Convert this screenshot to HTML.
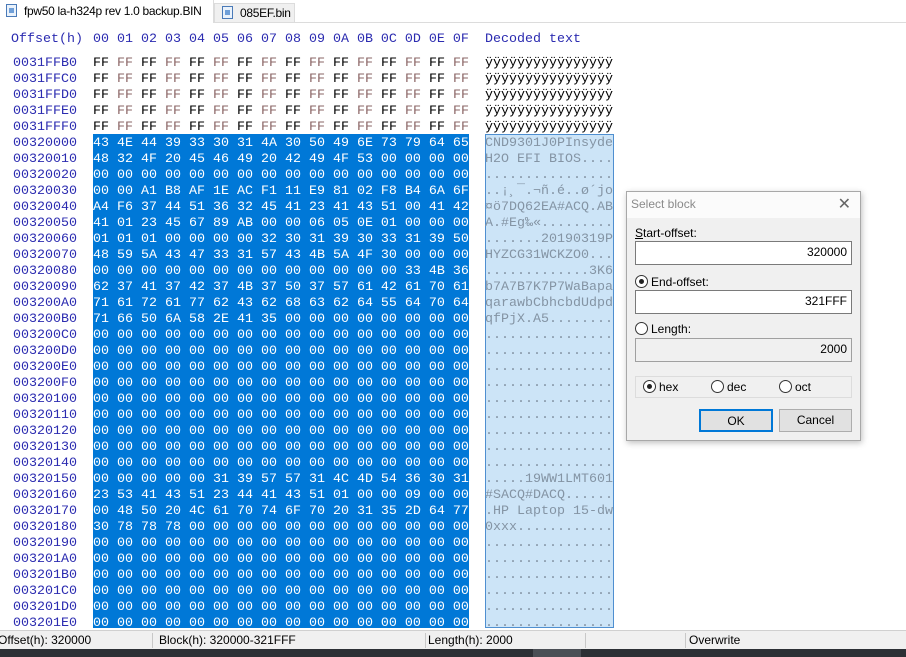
<!DOCTYPE html>
<html><head><meta charset="utf-8"><style>
*{margin:0;padding:0;box-sizing:border-box}
body{width:906px;height:657px;overflow:hidden;background:#fff;position:relative;font-family:"Liberation Sans",sans-serif}
.m{font-family:"Liberation Mono",monospace;font-size:13.33px;line-height:16px;white-space:pre;position:absolute}
.off{left:13px;top:56px;color:#2b2bb0}
.hex{left:93px;top:56px;color:#000}
.dec{left:485px;top:56px;width:128px;overflow:hidden;color:#000}
.hex i{font-style:normal;color:#8a6464}
.sel{color:#fff}
.dsel{color:#8494a4}
.hdr{top:32px;color:#2b2bb0}
#selbox{position:absolute;left:93px;top:134px;width:376px;height:494px;background:#0078d7}
#dbox{position:absolute;left:485px;top:134px;width:129px;height:494px;background:#cce4f7;border:1px solid #4f8fd0}
.tab{position:absolute;top:0;height:23px;font-size:12px;letter-spacing:-0.3px;line-height:22px;color:#000;white-space:nowrap;overflow:hidden}
.ic{display:inline-block;width:11px;height:13px;border:1px solid #4a7ab8;background:#eaf2fb;vertical-align:-2px;margin-right:7px;position:relative}
.ic:after{content:"";position:absolute;left:2px;top:3px;width:5px;height:5px;background:#6f9fd8}
#status{position:absolute;left:0;top:630px;width:906px;height:19px;background:#f0f0f0;border-top:1px solid #d0d0d0;font-size:12px;line-height:18px;color:#000}
#status span{position:absolute;top:0;white-space:nowrap}
#status b{position:absolute;top:2px;width:1px;height:15px;background:#c8c8c8}
#task{position:absolute;left:0;top:649px;width:906px;height:8px;background:#2c3035}
#dlg{position:absolute;left:626px;top:191px;width:235px;height:250px;background:#f0f0f0;border:1px solid #a8a8a8;box-shadow:1px 2px 6px rgba(0,0,0,.25);font-size:12px;color:#000}
#dlg .t{position:absolute;left:0;top:0;width:233px;height:26px;background:#fbfbfb;color:#8a8a8a;padding:5px 0 0 4px}
.inp{position:absolute;left:8px;width:217px;height:24px;background:#fff;border:1px solid #7a7a7a;text-align:right;padding:3px 4px 0 0}
.lbl{position:absolute;left:8px}
.rd{display:inline-block;width:13px;height:13px;border:1px solid #333;border-radius:50%;background:#fff;vertical-align:-2px;margin-right:3px;position:relative}
.rd.on:after{content:"";position:absolute;left:3px;top:3px;width:5px;height:5px;border-radius:50%;background:#222}
.btn{position:absolute;top:217px;height:23px;background:#e1e1e1;border:1px solid #adadad;text-align:center;line-height:20px}
</style></head><body>
<div style="position:absolute;left:0;top:22px;width:906px;height:1px;background:#dcdcdc"></div>
<div class="tab" style="left:0;width:214px;background:#fff;padding-left:6px;border-right:1px solid #dcdcdc;height:23px"><span class="ic"></span>fpw50 la-h324p rev 1.0 backup.BIN</div>
<div class="tab" style="left:214px;top:3px;height:19px;line-height:18px;width:81px;background:#f0f0f0;border:1px solid #dcdcdc;border-bottom:none;padding-left:7px"><span class="ic"></span>085EF.bin</div>

<div class="m hdr" style="left:11px">Offset(h)</div>
<div class="m hdr" style="left:93px">00 01 02 03 04 05 06 07 08 09 0A 0B 0C 0D 0E 0F</div>
<div class="m hdr" style="left:485px">Decoded text</div>

<div id="selbox"></div>
<div id="dbox"></div>

<div class="m off">0031FFB0
0031FFC0
0031FFD0
0031FFE0
0031FFF0
00320000
00320010
00320020
00320030
00320040
00320050
00320060
00320070
00320080
00320090
003200A0
003200B0
003200C0
003200D0
003200E0
003200F0
00320100
00320110
00320120
00320130
00320140
00320150
00320160
00320170
00320180
00320190
003201A0
003201B0
003201C0
003201D0
003201E0</div>

<div class="m hex">FF <i>FF</i> FF <i>FF</i> FF <i>FF</i> FF <i>FF</i> FF <i>FF</i> FF <i>FF</i> FF <i>FF</i> FF <i>FF</i>
FF <i>FF</i> FF <i>FF</i> FF <i>FF</i> FF <i>FF</i> FF <i>FF</i> FF <i>FF</i> FF <i>FF</i> FF <i>FF</i>
FF <i>FF</i> FF <i>FF</i> FF <i>FF</i> FF <i>FF</i> FF <i>FF</i> FF <i>FF</i> FF <i>FF</i> FF <i>FF</i>
FF <i>FF</i> FF <i>FF</i> FF <i>FF</i> FF <i>FF</i> FF <i>FF</i> FF <i>FF</i> FF <i>FF</i> FF <i>FF</i>
FF <i>FF</i> FF <i>FF</i> FF <i>FF</i> FF <i>FF</i> FF <i>FF</i> FF <i>FF</i> FF <i>FF</i> FF <i>FF</i>
<span class="sel">43 4E 44 39 33 30 31 4A 30 50 49 6E 73 79 64 65
48 32 4F 20 45 46 49 20 42 49 4F 53 00 00 00 00
00 00 00 00 00 00 00 00 00 00 00 00 00 00 00 00
00 00 A1 B8 AF 1E AC F1 11 E9 81 02 F8 B4 6A 6F
A4 F6 37 44 51 36 32 45 41 23 41 43 51 00 41 42
41 01 23 45 67 89 AB 00 00 06 05 0E 01 00 00 00
01 01 01 00 00 00 00 32 30 31 39 30 33 31 39 50
48 59 5A 43 47 33 31 57 43 4B 5A 4F 30 00 00 00
00 00 00 00 00 00 00 00 00 00 00 00 00 33 4B 36
62 37 41 37 42 37 4B 37 50 37 57 61 42 61 70 61
71 61 72 61 77 62 43 62 68 63 62 64 55 64 70 64
71 66 50 6A 58 2E 41 35 00 00 00 00 00 00 00 00
00 00 00 00 00 00 00 00 00 00 00 00 00 00 00 00
00 00 00 00 00 00 00 00 00 00 00 00 00 00 00 00
00 00 00 00 00 00 00 00 00 00 00 00 00 00 00 00
00 00 00 00 00 00 00 00 00 00 00 00 00 00 00 00
00 00 00 00 00 00 00 00 00 00 00 00 00 00 00 00
00 00 00 00 00 00 00 00 00 00 00 00 00 00 00 00
00 00 00 00 00 00 00 00 00 00 00 00 00 00 00 00
00 00 00 00 00 00 00 00 00 00 00 00 00 00 00 00
00 00 00 00 00 00 00 00 00 00 00 00 00 00 00 00
00 00 00 00 00 31 39 57 57 31 4C 4D 54 36 30 31
23 53 41 43 51 23 44 41 43 51 01 00 00 09 00 00
00 48 50 20 4C 61 70 74 6F 70 20 31 35 2D 64 77
30 78 78 78 00 00 00 00 00 00 00 00 00 00 00 00
00 00 00 00 00 00 00 00 00 00 00 00 00 00 00 00
00 00 00 00 00 00 00 00 00 00 00 00 00 00 00 00
00 00 00 00 00 00 00 00 00 00 00 00 00 00 00 00
00 00 00 00 00 00 00 00 00 00 00 00 00 00 00 00
00 00 00 00 00 00 00 00 00 00 00 00 00 00 00 00
00 00 00 00 00 00 00 00 00 00 00 00 00 00 00 00</span></div>

<div class="m dec">ÿÿÿÿÿÿÿÿÿÿÿÿÿÿÿÿ
ÿÿÿÿÿÿÿÿÿÿÿÿÿÿÿÿ
ÿÿÿÿÿÿÿÿÿÿÿÿÿÿÿÿ
ÿÿÿÿÿÿÿÿÿÿÿÿÿÿÿÿ
ÿÿÿÿÿÿÿÿÿÿÿÿÿÿÿÿ
<span class="dsel">CND9301J0PInsyde
H2O EFI BIOS....
................
..¡¸¯.¬ñ.é..ø´jo
¤ö7DQ62EA#ACQ.AB
A.#Eg‰«.........
.......20190319P
HYZCG31WCKZO0...
.............3K6
b7A7B7K7P7WaBapa
qarawbCbhcbdUdpd
qfPjX.A5........
................
................
................
................
................
................
................
................
................
.....19WW1LMT601
#SACQ#DACQ......
.HP Laptop 15-dw
0xxx............
................
................
................
................
................
................</span></div>

<div id="dlg">
<div class="t">Select block<span style="position:absolute;right:9px;top:2px;font-size:16px;color:#666">✕</span></div>
<div class="lbl" style="top:34px"><u>S</u>tart-offset:</div>
<div class="inp" style="top:49px">320000</div>
<div class="lbl" style="top:83px"><span class="rd on"></span>End-offset:</div>
<div class="inp" style="top:98px">321FFF</div>
<div class="lbl" style="top:130px"><span class="rd"></span>Length:</div>
<div class="inp" style="top:146px;background:#f0f0f0;border-color:#a0a0a0">2000</div>
<div style="position:absolute;left:8px;top:184px;width:217px;height:22px;border:1px solid #dcdcdc"></div>
<div class="lbl" style="top:188px;left:16px"><span class="rd on"></span>hex</div>
<div class="lbl" style="top:188px;left:84px"><span class="rd"></span>dec</div>
<div class="lbl" style="top:188px;left:152px"><span class="rd"></span>oct</div>
<div class="btn" style="left:72px;width:74px;border:2px solid #0078d7">OK</div>
<div class="btn" style="left:152px;width:73px">Cancel</div>
</div>

<div id="status">
<span style="left:-2px">Offset(h): 320000</span>
<b style="left:152px"></b>
<span style="left:159px">Block(h): 320000-321FFF</span>
<b style="left:425px"></b>
<span style="left:428px">Length(h): 2000</span>
<b style="left:585px"></b>
<b style="left:685px"></b>
<span style="left:689px">Overwrite</span>
</div>
<div id="task"><div style="position:absolute;left:533px;top:0;width:48px;height:8px;background:#4a4f55"></div></div>
</body></html>
